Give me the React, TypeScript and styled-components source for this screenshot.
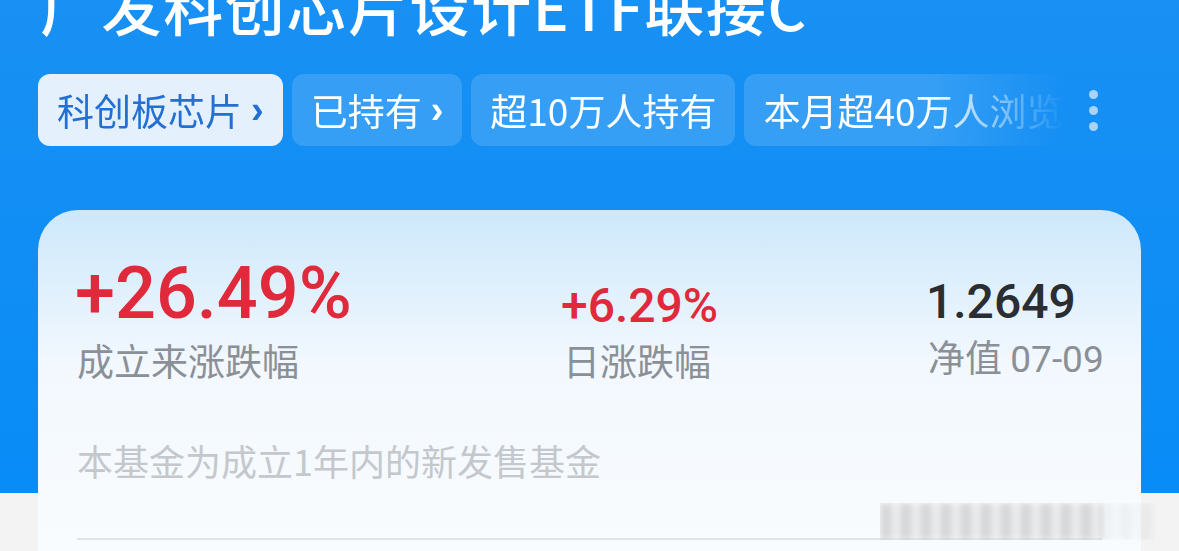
import styled, { createGlobalStyle } from "styled-components";

const GlobalStyle = createGlobalStyle`
  html, body {
    margin: 0;
    padding: 0;
  }
  body {
    font-family: "Noto Sans CJK SC", "Noto Sans", sans-serif;
  }
`

const tags = [
  { text: "科创板芯片", arrow: true, active: true },
  { text: "已持有", arrow: true, active: false },
  { text: "超10万人持有", arrow: false, active: false },
  { text: "本月超40万人浏览", arrow: false, active: false },
]

function App() {
  return (
    <Page>
      <GlobalStyle />
      <Title>广发科创芯片设计ETF联接C</Title>
      <TagStrip>
        <TagScroller>
          {tags.map((t) => (
            <Tag key={t.text} $active={t.active}>
              {t.text}
              {t.arrow && <Chevron>›</Chevron>}
            </Tag>
          ))}
        </TagScroller>
        <MoreDots>
          <Dot />
          <Dot />
          <Dot />
        </MoreDots>
      </TagStrip>

      <Card>
        <Stats>
          <Stat>
            <Value $size={72} $color="#e02a3c">+26.49%</Value>
            <Label>成立来涨跌幅</Label>
          </Stat>
          <Stat>
            <Value $size={48} $color="#e02a3c">+6.29%</Value>
            <Label>日涨跌幅</Label>
          </Stat>
          <Stat>
            <Value $size={48} $color="#2a2d31">1.2649</Value>
            <Label>
              净值 <DateText>07-09</DateText>
            </Label>
          </Stat>
        </Stats>
        <Note>本基金为成立1年内的新发售基金</Note>
        <Divider />
      </Card>
      <Watermark />
    </Page>
  )
}

export default App

const Page = styled.div`
  position: relative;
  width: 1179px;
  height: 551px;
  overflow: hidden;
  box-sizing: border-box;
  padding: 0 38px;
  display: flex;
  flex-direction: column;
  background: linear-gradient(
    to bottom,
    #1990f3 0px,
    #088cf7 493px,
    #f3f3f3 493px,
    #f3f3f3 100%
  );
`

const Title = styled.div`
  margin-top: -31px;
  padding-left: 2px;
  font-size: 60px;
  line-height: 72px;
  font-weight: 500;
  letter-spacing: 1.6px;
  color: #ffffff;
  white-space: nowrap;
`

const TagStrip = styled.div`
  display: flex;
  align-items: center;
  margin-top: 33px;
  height: 72px;
`

const TagScroller = styled.div`
  display: flex;
  gap: 9px;
  width: 1027px;
  overflow: hidden;
  -webkit-mask-image: linear-gradient(to right, #000 890px, transparent 1027px);
  mask-image: linear-gradient(to right, #000 890px, transparent 1027px);
`

const Tag = styled.div<{ $active: boolean }>`
  flex: none;
  display: flex;
  align-items: center;
  height: 72px;
  padding: 0 19px;
  border-radius: 12px;
  font-size: 37px;
  white-space: nowrap;
  color: ${(p) => (p.$active ? "#2470d2" : "#ffffff")};
  background: ${(p) => (p.$active ? "#e4f1fc" : "rgba(255, 255, 255, 0.14)")};
`

const Chevron = styled.span`
  margin-left: 9px;
  font-family: "Liberation Sans", sans-serif;
  font-size: 38px;
  font-weight: 700;
  line-height: 1;
`

const MoreDots = styled.div`
  display: flex;
  flex-direction: column;
  gap: 7px;
  margin-left: 24px;
`

const Dot = styled.span`
  width: 9px;
  height: 9px;
  border-radius: 50%;
  background: #a9d3f8;
`

const Card = styled.div`
  margin-top: 64px;
  flex: 1;
  border-radius: 40px 40px 0 0;
  padding: 48px 39px 0;
  background: linear-gradient(to bottom, #cde8fb 0%, #f2f8fe 45%, #f9fcfe 100%);
`

const Stats = styled.div`
  display: grid;
  grid-template-columns: 486px 365px auto;
  align-items: end;
`

const Stat = styled.div`
  display: flex;
  flex-direction: column;
`

const Value = styled.div<{ $size: number; $color: string }>`
  font-family: Roboto, "Noto Sans", sans-serif;
  font-size: ${(p) => p.$size}px;
  line-height: 1;
  font-weight: 500;
  color: ${(p) => p.$color};
  margin-left: -2px;
`

const Label = styled.div`
  margin-top: 8px;
  font-size: 37px;
  line-height: 44px;
  color: #8b9096;
  white-space: nowrap;
`

const DateText = styled.span`
  font-family: Roboto, "Noto Sans", sans-serif;
`

const Note = styled.div`
  margin-top: 56px;
  font-size: 36px;
  line-height: 44px;
  color: #c4c8cc;
`

const Divider = styled.div`
  margin-top: 56px;
  border-top: 2px solid #e3e6e9;
`

/* blurred corner watermark */
const Watermark = styled.div`
  position: absolute;
  left: 880px;
  top: 503px;
  width: 275px;
  height: 37px;
  filter: blur(3px);
  opacity: 0.55;
  background: repeating-linear-gradient(
    to right,
    #b9b9b9 0px,
    #b9b9b9 10px,
    #e6e6e6 14px,
    #e6e6e6 20px
  );
  -webkit-mask-image: linear-gradient(to right, #000 80%, rgba(0, 0, 0, 0.3) 82%);
  mask-image: linear-gradient(to right, #000 80%, rgba(0, 0, 0, 0.3) 82%);
`
